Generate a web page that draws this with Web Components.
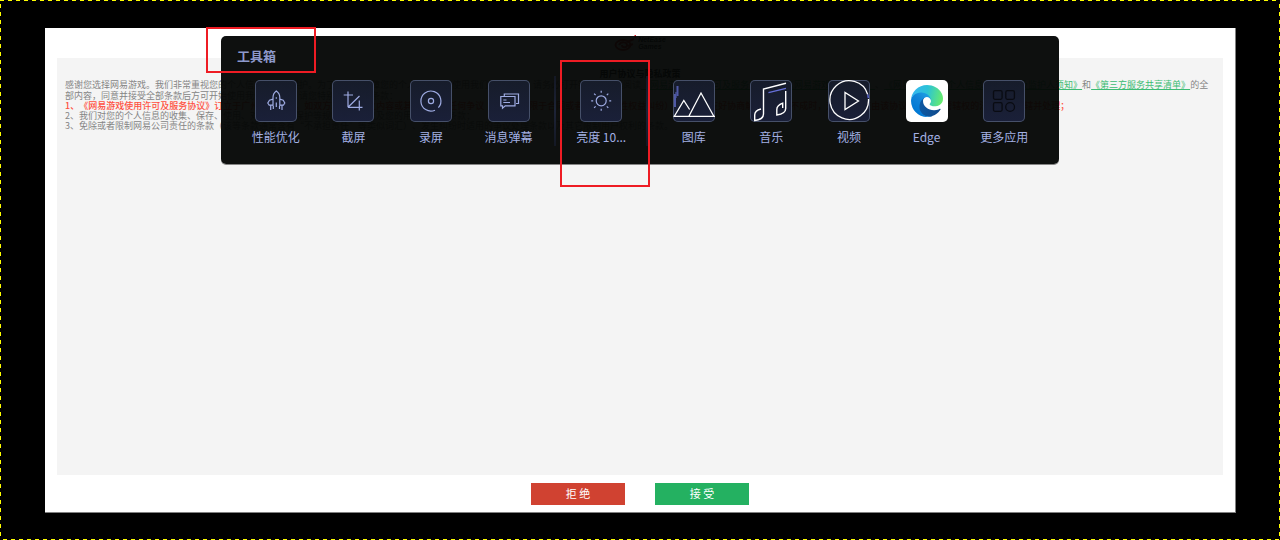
<!DOCTYPE html>
<html lang="zh-CN">
<head>
<meta charset="utf-8">
<title>工具箱</title>
<style>
    body {
        margin: 0;
        background: #000;
        font-family: "Noto Sans CJK SC", sans-serif;
        text-spacing-trim: space-all;
    }
</style>
</head>
<body>

<game-screen>
    <agreement-page>
        <netease-logo slot="logo"></netease-logo>
        <span slot="title">用户协议与隐私政策</span>
        <p>感谢您选择网易游戏。我们非常重视您的个人信息和隐私保护。为了更好地保障您的个人权益，在使用我们的产品前，请务必打开链接并审慎阅读<a href="#license">《网易游戏使用许可及服务协议》</a>、<a href="#privacy">《网易游戏隐私政策》</a>、<a href="#children">《网易游戏儿童个人信息保护规则及监护人须知》</a>和<a href="#sharing">《第三方服务共享清单》</a>的全部内容，同意并接受全部条款后方可开始使用我们的服务。请您特别注意以下条款：</p>
        <p class="clause important">1、《网易游戏使用许可及服务协议》订立于广州市天河区。如双方就本协议之内容或其执行发生任何争议（包括但不限于合同或者其他财产性权益纠纷），双方应友好协商解决；协商不成时，双方同意交由该协议签订地有管辖权的法院诉讼管辖并处理；</p>
        <p class="clause">2、我们对您的个人信息的收集、保存、使用、对外提供、保护等规则条款，以及您的用户权利等条款；</p>
        <p class="clause">3、免除或者限制网易公司责任的条款（该等条款通常含有“不承担责任”等类似词汇）、发生纠纷时适用的争议处理条款以及其它限制用户权利的条款。</p>
        <agreement-button slot="actions" kind="reject">拒 绝</agreement-button>
        <agreement-button slot="actions" kind="accept">接 受</agreement-button>
    </agreement-page>

    <tool-box slot="overlay">
        <span slot="title">工具箱</span>
        <tool-item icon="rocket">性能优化</tool-item>
        <tool-item icon="crop">截屏</tool-item>
        <tool-item icon="record">录屏</tool-item>
        <tool-item icon="message">消息弹幕</tool-item>
        <tool-divider></tool-divider>
        <tool-item icon="sun">亮度 10...</tool-item>
        <tool-divider></tool-divider>
        <tool-item icon="gallery">图库</tool-item>
        <tool-item icon="music">音乐</tool-item>
        <tool-item icon="video">视频</tool-item>
        <tool-item icon="edge">Edge</tool-item>
        <tool-item icon="more">更多应用</tool-item>
    </tool-box>

    <highlight-box slot="overlay" style="--x: -434px; --y: 27px; --w: 110px; --h: 46px"></highlight-box>
    <highlight-box slot="overlay" style="--x: -80px; --y: 60px; --w: 90px; --h: 127px"></highlight-box>
</game-screen>

<script>
const ICONS = {
    rocket: `
        <path d="M18 26V17.5C18 14.5 19.5 12.3 21.3 11C23.2 12.3 24.8 14.5 24.8 17.5V26M18 19.2L14.5 20.2L12.8 23L14.2 25.2H18M24.8 19.2L28.2 20.2L29.8 23L28.4 25.2H24.8M21.3 17.2V18.8M21.3 22.5V27M15.7 25.5V30M27 25.5V30M18.3 26V29M24.5 26V29"/>`,
    crop: `<path d="M16 11.5V27.3M11.7 15H21M16 27.3H30.5M27.3 20.5V30.5M16 27.3L27.5 16"/>`,
    record: `
        <path d="M25 30.2A10 10 0 1 1 28.4 27.7"/>
        <circle cx="21" cy="21" r="2.6"/>`,
    message: `
        <path d="M16.3 16V14H30.5V23.5H28"/>
        <path d="M12.8 16.5H27V25.8H17.3L14.5 28.2V25.8H12.8Z"/>
        <path d="M15.3 20H18.5M15.3 22.5H22"/>`,
    sun: `
        <circle cx="21.2" cy="20.8" r="5"/>
        <path d="M21.2 10.8V12.8M21.2 28.8V30.8M11.2 20.8H13.2M29.2 20.8H31.2M14.1 13.7L15.6 15.2M26.8 26.4L28.3 27.9M28.3 13.7L26.8 15.2M15.6 26.4L14.1 27.9"/>`,
    gallery: `
        <path d="M4.5 6V16M2 14V27" stroke="#4f59a6" stroke-width="2"/>
        <path d="M3 12V18" stroke="#4f59a6"/>
        <path d="M.5 36.3H42M1.5 36L10.8 20.5L16.6 29.5M16 36L28 13L40.7 36" stroke="#fff" stroke-width="1.3"/>`,
    music: `
        <path d="M36 3.3L13.5 9V34C13.5 38.5 10 39.8 4.7 40.5V35C4.7 31.5 7 30 11 29M35.7 11V28.5C35.7 32.5 32 34.2 26.8 35V29.5C26.8 26 29 24.6 32.7 23.2V28" stroke="#fff" stroke-width="1.4"/>
        <path d="M18.5 12.7L36 8.3" stroke="#6670d8" stroke-width="1.3"/>`,
    video: `
        <path d="M39.7 14.5A19.3 19.3 0 1 0 40.5 19M17 12.5V29.5L30.5 21Z" stroke="#fff" stroke-width="1.3"/>
        <path d="M39.8 14.5L40.4 18" stroke="#5662c8" stroke-width="1.5"/>`,
    edge: `
        <defs>
            <linearGradient id="low" gradientUnits="userSpaceOnUse" x1="59" y1="177" x2="236" y2="177">
                <stop offset="0" stop-color="#0c59a4"/><stop offset="1" stop-color="#114a8b"/>
            </linearGradient>
            <linearGradient id="mid" gradientUnits="userSpaceOnUse" x1="150" y1="95" x2="40" y2="220">
                <stop offset="0" stop-color="#1b9de2"/><stop offset=".4" stop-color="#1384d8"/><stop offset="1" stop-color="#0078d4"/>
            </linearGradient>
            <linearGradient id="top" gradientUnits="userSpaceOnUse" x1="20" y1="60" x2="250" y2="110">
                <stop offset="0" stop-color="#35b8ee"/><stop offset=".45" stop-color="#2cc3d6"/><stop offset="1" stop-color="#66eb6e"/>
            </linearGradient>
        </defs>
        <g transform="translate(5 5) scale(.125)" stroke="none">
            <path fill="url(#low)" d="M231.07 190.54c-3.42 1.78-6.94 3.34-10.57 4.7a101.9 101.9 0 01-35.87 6.46c-47.27 0-88.44-32.52-88.44-74.25.14-11.4 6.42-21.8 16.43-27.22-42.75 1.8-53.74 46.35-53.74 72.45 0 73.81 68.02 81.3 82.68 81.3 7.9 0 19.82-2.3 26.98-4.56l1.31-.44a128.34 128.34 0 0066.6-52.8 4 4 0 00-5.38-5.64z"/>
            <path fill="url(#mid)" d="M105.73 241.42a79.2 79.2 0 01-22.74-21.34 80.72 80.72 0 0129.53-120c3.12-1.47 8.45-4.13 15.54-4a32.35 32.35 0 0125.69 13 31.88 31.88 0 016.36 18.66c0-.21 24.46-79.6-80-79.6-43.9 0-80 41.66-80 78.21a130.15 130.15 0 0012.11 56 128 128 0 00156.38 67.11 75.55 75.55 0 01-62.78-8z"/>
            <path fill="url(#top)" d="M152.33 148.86c-.81 1.05-3.3 2.5-3.3 5.66 0 2.61 1.7 5.12 4.72 7.23 14.38 10 41.49 8.68 41.56 8.68a59.56 59.56 0 0030.27-8.35A61.38 61.38 0 00256 109.2c.26-22.41-8-37.31-11.34-43.91C223.46 23.84 177.72 0 128 0A128 128 0 000 126.2c.48-36.54 36.8-66.05 80-66.05 3.5 0 23.46.34 42 10.07 16.34 8.58 24.9 18.94 30.85 29.21 6.18 10.67 7.28 24.15 7.28 29.52 0 5.37-2.74 13.33-7.8 19.91z"/>
        </g>`,
    more: `
        <g stroke="#090b12" stroke-width="1.3">
            <rect x="10.5" y="10.7" width="8.6" height="8.6" rx="1.5"/>
            <rect x="22.8" y="10.7" width="8.6" height="8.6" rx="1.5"/>
            <rect x="10.5" y="22.7" width="8.6" height="8.6" rx="1.5"/>
            <circle cx="27.1" cy="27" r="4.4"/>
        </g>`
};

class GameScreen extends HTMLElement {
    constructor(){
        super();
        this.attachShadow({ mode: 'open' });
        this.shadowRoot.innerHTML = `
            <style>
                :host {
                    position: relative;
                    display: flex;
                    box-sizing: border-box;
                    min-height: 100vh;
                    padding: 28px 44px 27px 45px;
                    background:
                        repeating-linear-gradient(90deg, #ff0 0 4px, #000 4px 8px) top / 100% 1px no-repeat,
                        repeating-linear-gradient(90deg, #000 0 3px, #ff0 3px 7px, #000 7px 8px) bottom / 100% 1px no-repeat,
                        repeating-linear-gradient(#000 0 4px, #ff0 4px 8px) left / 1px 100% no-repeat,
                        repeating-linear-gradient(#000 0 4px, #ff0 4px 8px) right / 1px 100% no-repeat,
                        #000;
                }
            </style>
            <slot></slot>
            <slot name="overlay"></slot>
        `;
    }
}

class AgreementPage extends HTMLElement {
    constructor(){
        super();
        this.attachShadow({ mode: 'open' });
        this.shadowRoot.innerHTML = `
            <style>
                :host {
                    flex: 1;
                    display: flex;
                    flex-direction: column;
                    box-sizing: border-box;
                    padding: 0 12px 7px;
                    background: #fff;
                    border: solid #808080;
                    border-width: 0 1px 1px 0;
                    color: #858585;
                    font-size: 9px;
                    line-height: 11px;
                }

                header {
                    display: flex;
                    justify-content: center;
                    height: 24px;
                    padding-top: 6px;
                }

                main {
                    flex: 1;
                    padding: 10px 8px;
                    background: #f4f4f4;
                }

                h1 {
                    margin: 0;
                    color: #222;
                    font-size: 9px;
                    line-height: 11px;
                    text-align: center;
                }

                ::slotted(p) {
                    margin: 0;
                }

                ::slotted(.clause) {
                    line-height: 10px;
                }

                ::slotted(.important) {
                    color: #ff5041;
                    font-weight: 500;
                }

                footer {
                    display: flex;
                    justify-content: center;
                    gap: 30px;
                    padding-top: 8px;
                }
            </style>
            <header><slot name="logo"></slot></header>
            <main>
                <h1><slot name="title"></slot></h1>
                <slot></slot>
            </main>
            <footer><slot name="actions"></slot></footer>
        `;
    }

    connectedCallback(){
        // ::slotted only reaches direct children, so links inside a paragraph are coloured here
        this.querySelectorAll('p a').forEach(link => {
            link.style.color = '#3cbc73';
        });
    }
}

class NeteaseLogo extends HTMLElement {
    constructor(){
        super();
        this.attachShadow({ mode: 'open' });
        this.shadowRoot.innerHTML = `
            <style>
                :host {
                    display: flex;
                    align-items: center;
                    gap: 2px;
                    height: 18px;
                    color: #222;
                    font: italic bold 7px/7px "Liberation Sans", sans-serif;
                }
            </style>
            <svg width="22" height="18" viewBox="0 0 22 18" fill="none" stroke="#d8222a" stroke-width="2">
                <ellipse cx="9" cy="11" rx="7.5" ry="5"/>
                <path d="M5 11C7 7 13 8 13 11S8 14 8 11M13 8L20 5M14 12L19 10M21.500 1V4"/>
            </svg>
            <div>NetEase<br>Games</div>
        `;
    }
}

class AgreementButton extends HTMLElement {
    constructor(){
        super();
        this.attachShadow({ mode: 'open' });
        this.shadowRoot.innerHTML = `
            <style>
                :host {
                    display: block;
                }

                button {
                    display: block;
                    width: 94px;
                    height: 22px;
                    padding: 0 0 2px;
                    border: 0;
                    background: #d04231;
                    color: #fff;
                    font: 11px/20px "Noto Sans CJK SC", sans-serif;
                    cursor: pointer;
                }

                :host([kind="accept"]) button {
                    background: #24b161;
                }
            </style>
            <button type="button"><slot></slot></button>
        `;
    }
}

class ToolBox extends HTMLElement {
    constructor(){
        super();
        this.attachShadow({ mode: 'open' });
        this.shadowRoot.innerHTML = `
            <style>
                :host {
                    position: absolute;
                    top: 36px;
                    left: 221px;
                    right: 221px;
                    box-sizing: border-box;
                    padding: 10px 16px 18px;
                    background: rgba(4, 6, 5, 0.96);
                    border-radius: 5px;
                    box-shadow: 0 1px 0 #858585;
                    color: #a3b0e4;
                }

                h2 {
                    margin: 0 0 9px;
                    color: #8d99cb;
                    font-size: 13px;
                    font-weight: 700;
                    line-height: 20px;
                }

                nav {
                    display: flex;
                    align-items: center;
                }
            </style>
            <h2><slot name="title"></slot></h2>
            <nav><slot></slot></nav>
        `;
    }
}

class ToolItem extends HTMLElement {
    constructor(){
        super();
        this.attachShadow({ mode: 'open' });
    }

    connectedCallback(){
        const icon = this.getAttribute('icon');
        this.shadowRoot.innerHTML = `
            <style>
                :host {
                    flex: 1;
                    min-width: 0;
                }

                button {
                    display: flex;
                    flex-direction: column;
                    align-items: center;
                    gap: 6px;
                    width: 100%;
                    padding: 5px 0 0;
                    border: 0;
                    background: none;
                    color: inherit;
                    font: 12px/18px "Noto Sans CJK SC", sans-serif;
                    white-space: nowrap;
                    cursor: pointer;
                }

                .tile {
                    box-sizing: border-box;
                    width: 42px;
                    height: 42px;
                    border-radius: 5px;
                    background: linear-gradient(rgba(23, 29, 44, 0.93), rgba(27, 33, 60, 0.93));
                    box-shadow: inset 0 0 0 1px #465069;
                }

                :host([icon="edge"]) .tile {
                    background: #fff;
                    box-shadow: none;
                }

                svg {
                    display: block;
                    fill: none;
                    stroke: #9eabe2;
                    stroke-width: 1.2;
                }
            </style>
            <button type="button">
                <span class="tile"><svg width="42" height="42" viewBox="0 0 42 42" aria-hidden="true">${ICONS[icon]}</svg></span>
                <span><slot></slot></span>
            </button>
        `;
    }
}

class ToolDivider extends HTMLElement {
    constructor(){
        super();
        this.attachShadow({ mode: 'open' });
        this.shadowRoot.innerHTML = `
            <style>
                :host {
                    display: flex;
                    justify-content: center;
                    width: 15px;
                    height: 70px;
                }

                div {
                    width: 2px;
                    background: linear-gradient(#141824, #1d2336, #141824);
                }
            </style>
            <div></div>
        `;
    }
}

// Frame drawn over the screen, placed from the horizontal centre
class HighlightBox extends HTMLElement {
    constructor(){
        super();
        this.attachShadow({ mode: 'open' });
        this.shadowRoot.innerHTML = `
            <style>
                :host {
                    position: absolute;
                    left: calc(50% + var(--x));
                    top: var(--y);
                    box-sizing: border-box;
                    width: var(--w);
                    height: var(--h);
                    border: 2px solid #ee1c24;
                    pointer-events: none;
                }
            </style>
        `;
    }
}

customElements.define('game-screen', GameScreen);
customElements.define('agreement-page', AgreementPage);
customElements.define('netease-logo', NeteaseLogo);
customElements.define('agreement-button', AgreementButton);
customElements.define('tool-box', ToolBox);
customElements.define('tool-item', ToolItem);
customElements.define('tool-divider', ToolDivider);
customElements.define('highlight-box', HighlightBox);
</script>
</body>
</html>
